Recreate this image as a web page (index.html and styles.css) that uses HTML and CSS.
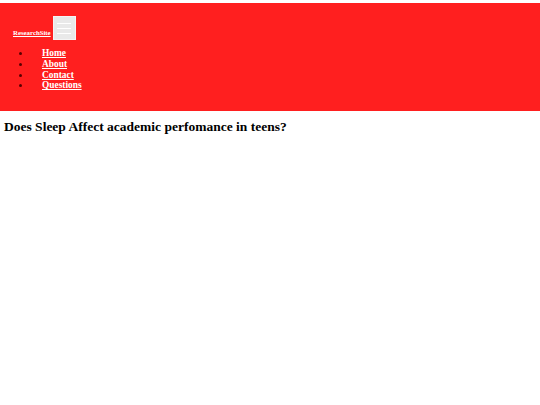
FILE: index.html
```html
<!DOCTYPE html>
<html lang="en">
<head>
<meta charset="utf-8">
<title>ResearchSite</title>
<link rel="stylesheet" href="styles.css">
</head>
<body>
<header class="site-header">
  <div class="brand-row">
    <a class="brand" href="#">ResearchSite</a>
    <button class="menu-toggle" type="button" aria-label="Menu">
      <span class="bar"></span>
      <span class="bar"></span>
      <span class="bar"></span>
    </button>
  </div>
  <ul class="nav-list">
    <li><a href="#">Home</a></li>
    <li><a href="#">About</a></li>
    <li><a href="#">Contact</a></li>
    <li><a href="#">Questions</a></li>
  </ul>
</header>
<h1 class="title">Does Sleep Affect academic perfomance in teens?</h1>
</body>
</html>
```
FILE: styles.css
```css
html, body {
  margin: 0;
  padding: 0;
  background: #ffffff;
}
body {
  font-family: "Liberation Serif", "Times New Roman", serif;
  color: #000000;
}
.site-header {
  margin-top: 3px;
  background: #ff1f1f;
  padding: 13px 0 20px 0;
}
.brand-row {
  display: flex;
  align-items: center;
  padding-left: 13px;
}
.brand {
  color: #ffffff;
  font-weight: bold;
  font-size: 6.8px;
  text-decoration: underline;
  margin-right: 2px;
  margin-top: 8px;
}
.menu-toggle {
  width: 23px;
  height: 24px;
  padding: 0;
  margin: 0;
  border: 1px solid #f4f4f4;
  background: #e9e9e9;
  display: flex;
  flex-direction: column;
  align-items: center;
  justify-content: center;
  gap: 4px;
}
.bar {
  display: block;
  width: 14px;
  height: 1px;
  background: #ffffff;
}
.nav-list {
  margin: 8px 0 0 0;
  padding-left: 31px;
  font-size: 9.4px;
  line-height: 10.8px;
  font-weight: bold;
  color: #5a0000;
}
.nav-list a {
  display: inline-block;
  margin-left: 11px;
  color: #ffffff;
  text-decoration: underline;
}
.title {
  font-size: 13.5px;
  margin: 8px 4px;
  font-weight: bold;
}
```
